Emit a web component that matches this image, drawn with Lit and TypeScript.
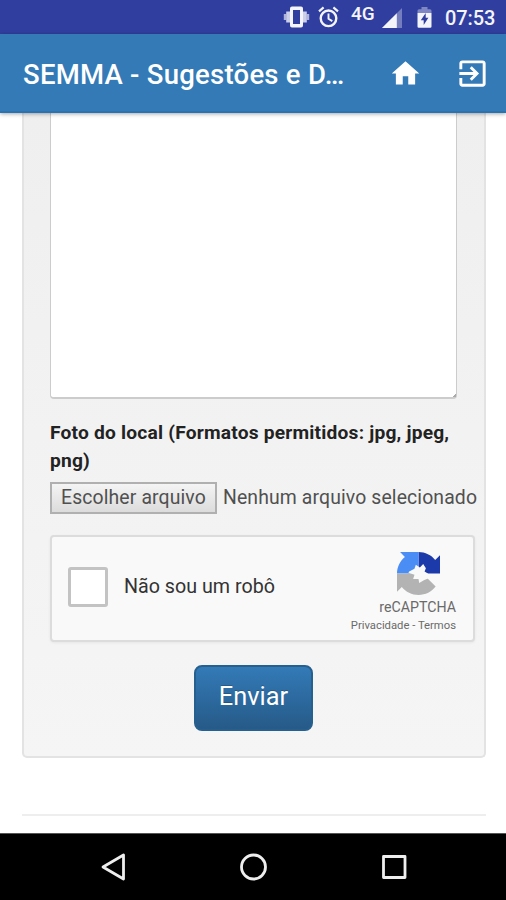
import { LitElement, html, css } from "lit";
import { customElement } from "lit/decorators.js";

@customElement("status-bar")
class StatusBar extends LitElement {
  static styles = css`
    :host { display: flex; height: 34px; background: #303f9f; color: #f4f4fb; justify-content: flex-end; align-items: flex-start; box-sizing: border-box; padding-right: 11px; }
    svg { display: block; flex: none; }
    .vibrate { margin: 4px 8px 0 0; }
    .alarm { margin: 5px 12px 0 0; }
    .net { font-size: 19px; line-height: 18px; font-weight: 500; margin: 5px 7px 0 0; width: 24px; white-space: nowrap; }
    .signal { margin: 8px 14px 0 0; }
    .battery { margin: 7px 13px 0 0; }
    .time { font-size: 20px; line-height: 24px; font-weight: 500; margin-top: 6px; width: 50px; white-space: nowrap; letter-spacing: -0.1px; }
  `;
  render() {
    return html`
      <svg class="vibrate" width="27" height="26" viewBox="0 0 27 26" fill="currentColor">
        <path fill-rule="evenodd" d="M9 2.500h9a2 2 0 0 1 2 2v17a2 2 0 0 1-2 2H9a2 2 0 0 1-2-2v-17a2 2 0 0 1 2-2zM10 6v14h7V6z" />
        <path opacity=".8" d="M3.200 7.500H7v11H3.200zM20 7.500h3.800v11H20z" />
        <path opacity=".65" d="M.8 10h2.400v6H.8zM23.800 10h2.400v6h-2.400z" />
      </svg>
      <svg class="alarm" width="21" height="24" viewBox="0 0 21 24" fill="none" stroke="currentColor">
        <circle cx="10.500" cy="13.300" r="7.800" stroke-width="2.400" />
        <path stroke-width="1.900" d="M10.500 8.500v5.300l3.800 2.300" />
        <path stroke-width="2.200" d="M1 6.300l4.600-3.900M20 6.300l-4.600-3.900" />
      </svg>
      <div class="net">4G</div>
      <svg class="signal" width="21" height="20" viewBox="0 0 21 20" fill="currentColor">
        <path opacity=".35" d="M0 20L20 0v20z" />
        <path d="M0 20L14.800 5.200V20z" />
      </svg>
      <svg class="battery" width="15" height="21" viewBox="0 0 15 21" fill="currentColor">
        <path opacity=".4" d="M4.500 0h6v2.200H13a1.500 1.500 0 0 1 1.500 1.500V6H.5V3.700A1.500 1.500 0 0 1 2 2.200h2.500z" />
        <path d="M.5 6h14v13.500a1.300 1.300 0 0 1-1.300 1.300H1.800A1.300 1.300 0 0 1 .5 19.500z" />
        <path fill="#303f9f" d="M8.700 6L3.800 13.300h2.900V18l4.700-7.200H8.700z" />
      </svg>
      <div class="time">07:53</div>
    `;
  }
}

@customElement("title-bar")
class TitleBar extends LitElement {
  static styles = css`
    :host { display: flex; height: 79px; background: #337ab7; color: #fff; align-items: center; box-sizing: border-box; padding: 0 16px 0 23px; box-shadow: 0 1px 4px rgba(0,0,0,.35); border-bottom: 2px solid #2b73b0; position: relative; z-index: 1; }
    .title { font-size: 27.500px; line-height: 36px; font-weight: 500; letter-spacing: 0.25px; flex: none; width: 366px; white-space: nowrap; margin-top: 5px; }
    svg { display: block; flex: none; fill: currentColor; }
    .home { margin-top: 2px; }
    .exit { margin: 2px 0 0 33px; }
  `;
  render() {
    return html`
      <div class="title">SEMMA - Sugestões e D…</div>
      <svg class="home" width="33" height="33" viewBox="0 0 24 24"><path d="M10 20v-6h4v6h5v-8h3L12 3 2 12h3v8z" /></svg>
      <svg class="exit" width="35" height="35" viewBox="0 0 24 24"><path d="M10.090 15.590L11.500 17l5-5-5-5-1.410 1.410L12.670 11H3v2h9.670l-2.580 2.590zM19 3H5c-1.110 0-2 .9-2 2v4h2V5h14v14H5v-4H3v4c0 1.100.89 2 2 2h14c1.100 0 2-.9 2-2V5c0-1.100-.9-2-2-2z" /></svg>
    `;
  }
}

@customElement("captcha-box")
class CaptchaBox extends LitElement {
  static styles = css`
    :host { display: flex; box-sizing: border-box; width: 425px; height: 107px; border: 2px solid #dcdcdc; border-radius: 4px; background: #f9f9f9; box-shadow: 0 1px 3px rgba(0,0,0,.06); align-items: center; padding-left: 16px; }
    .box { box-sizing: border-box; width: 40px; height: 40px; flex: none; border: 3px solid #c3c3c3; border-radius: 3px; background: #fff; margin-top: -3px; }
    .label { margin: -3px 0 0 16px; font-size: 19.700px; line-height: 26px; color: #333; white-space: nowrap; flex: 1; }
    .brand { align-self: stretch; width: 120px; margin-right: 17px; display: flex; flex-direction: column; align-items: flex-end; color: #6a6a6a; }
    svg { display: block; margin: 15px 16px 0 0; }
    .name { font-size: 14.200px; line-height: 18px; margin-top: 3px; white-space: nowrap; }
    .links { font-size: 11.270px; line-height: 14px; margin-top: 3px; white-space: nowrap; }
  `;
  render() {
    return html`
      <div class="box"></div>
      <div class="label">Não sou um robô</div>
      <div class="brand">
        <svg width="43" height="43" viewBox="0 0 64 64">
          <path fill="#1c3aa9" d="M32 .1C42 .1 51 4.700 56.800 11.800L64 4.700V32H32z" />
          <path fill="#4a8df5" d="M32 .1H4.600l7.160 7.160C4.600 13 0 22 0 32h32z" />
          <path fill="#b3b3b3" d="M0 32v27.300l7.160-7.160C13 59.300 22 64 32 64c10.400 0 19.600-5 25.500-12.600L45.500 39.500 32 32z" />
          <path fill="#f9f9f9" d="M18 29l8-4 2-6 6 4 5-5 4 6-2 5 5 3v7.500L40 42l-7 4-1-6-8 0 2-6-9-3z" />
        </svg>
        <div class="name">reCAPTCHA</div>
        <div class="links">Privacidade - Termos</div>
      </div>
    `;
  }
}

@customElement("nav-bar")
class NavBar extends LitElement {
  static styles = css`
    :host { display: flex; height: 67px; background: #000; align-items: center; justify-content: center; gap: 112px; box-sizing: border-box; padding-left: 2px; border-top: 1px solid #555; }
    svg { display: block; fill: none; stroke: #eee; stroke-width: 2.800; stroke-linejoin: round; }
  `;
  render() {
    return html`
      <svg width="28" height="28" viewBox="0 0 28 28"><path d="M3 14L23.500 2v24z" /></svg>
      <svg width="28" height="28" viewBox="0 0 28 28"><circle cx="13.500" cy="14" r="12" /></svg>
      <svg width="28" height="28" viewBox="0 0 28 28"><path d="M3.500 3.500h21.500v21H3.500z" /></svg>
    `;
  }
}

@customElement("app-root")
class AppRoot extends LitElement {
  static styles = css`
    :host { display: flex; flex-direction: column; width: 506px; height: 900px; overflow: hidden; background: #fff; font-family: Roboto, "Liberation Sans", sans-serif; }
    main { flex: 1; display: flex; flex-direction: column; align-items: flex-start; padding: 0 20px 0 22px; }
    .card { box-sizing: border-box; width: 464px; height: 645px; flex: none; padding: 0 0 0 26px; border: 2px solid #e3e3e3; border-top: 0; border-radius: 0 0 5px 5px; background: linear-gradient(#efefef, #f5f5f5); }
    .area { box-sizing: border-box; width: 407px; height: 286px; background: #fff; border: 1px solid #ccc; border-top: 0; border-bottom-width: 2px; border-radius: 0 0 4px 4px; display: flex; align-items: flex-end; justify-content: flex-end; }
    .grip { width: 4px; height: 3px; background: linear-gradient(135deg, transparent 50%, #aaa 50%); }
    .caption { margin-top: 20px; font-size: 19.200px; letter-spacing: 0.2px; line-height: 28px; font-weight: 700; color: #222; white-space: nowrap; }
    .file { display: flex; align-items: center; margin-top: 7px; height: 32px; font-size: 19.400px; letter-spacing: 0.12px; color: #505050; white-space: nowrap; }
    .choose { box-sizing: border-box; width: 167px; height: 32px; border: 2px solid #b0b0b0; background: linear-gradient(#f4f4f4, #dcdcdc); line-height: 27px; padding-left: 9px; }
    .none { margin-left: 6px; line-height: 28px; margin-top: -1px; }
    captcha-box { margin-top: 21px; }
    .send { box-sizing: border-box; width: 119px; height: 66px; margin: 23px 0 0 144px; border: 2px solid #25608f; border-radius: 8px; background: linear-gradient(#337ab7, #265a88); color: #fff; font-size: 25.400px; line-height: 59px; text-align: center; text-shadow: 0 -1px 0 rgba(0,0,0,.2); }
    .rule { align-self: stretch; height: 2px; margin-top: 56px; background: #eee; }
  `;
  render() {
    return html`
      <status-bar></status-bar>
      <title-bar></title-bar>
      <main>
        <div class="card">
          <div class="area"><div class="grip"></div></div>
          <div class="caption">Foto do local (Formatos permitidos: jpg, jpeg,<br />png)</div>
          <div class="file">
            <div class="choose">Escolher arquivo</div>
            <div class="none">Nenhum arquivo selecionado</div>
          </div>
          <captcha-box></captcha-box>
          <div class="send">Enviar</div>
        </div>
        <div class="rule"></div>
      </main>
      <nav-bar></nav-bar>
    `;
  }
}
